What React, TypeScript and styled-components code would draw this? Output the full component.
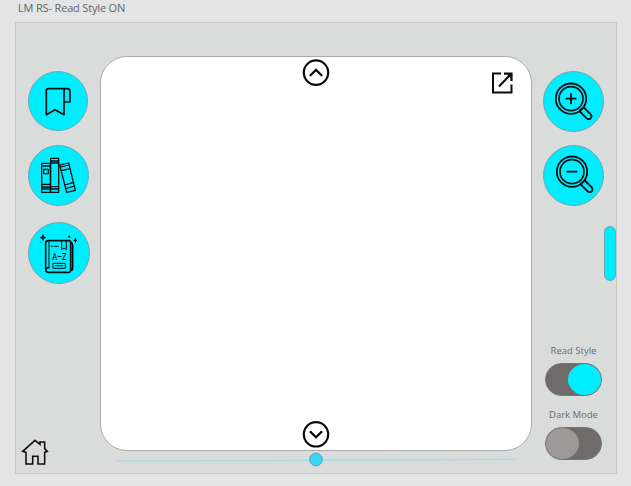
import React, { ReactNode } from "react";
import styled, { createGlobalStyle } from "styled-components";

const GlobalStyle = createGlobalStyle`
  *, *::before, *::after { box-sizing: border-box; }
  body {
    margin: 0;
    background: #e4e4e4;
    font-family: "Open Sans", "Noto Sans", sans-serif;
    overflow: hidden;
  }
  svg { display: block; flex: none; }
`;

const Artboard = styled.div`
  width: 631px;
  height: 486px;
  padding-left: 15px;
`;

const Title = styled.h1`
  margin: 0;
  height: 22px;
  padding-left: 3px;
  font-size: 11px;
  font-weight: 400;
  line-height: 16px;
  letter-spacing: -0.17px;
  white-space: nowrap;
  color: #656565;
`;

const Screen = styled.main`
  display: grid;
  grid-template-columns: 84px 432px 84px;
  width: 602px;
  height: 452px;
  border: 1px solid #c7c9c9;
  background: #dadcdb;
`;

const Rail = styled.nav`
  display: flex;
  flex-direction: column;
  align-items: flex-start;
  padding: 48px 0 6px 12px;
`;

const ControlRail = styled.aside`
  display: flex;
  flex-direction: column;
  align-items: flex-start;
  padding: 48px 0 0 11px;
`;

const RoundButton = styled.button<{ $size: number; $gap?: number }>`
  display: flex;
  flex: none;
  width: ${(p) => p.$size}px;
  height: ${(p) => p.$size}px;
  margin: ${(p) => p.$gap ?? 0}px 0 0;
  padding: 0;
  border: 1px solid #6fa9ad;
  border-radius: 50%;
  background: #00ecff;
  color: #04100f;
`;

const PlainButton = styled.button<{ $push?: boolean }>`
  display: flex;
  flex: none;
  margin: ${(p) => (p.$push ? "auto 0 0 -7px" : "0")};
  padding: 0;
  border: 0;
  background: none;
  color: #0c0c0c;
`;

const Center = styled.section`
  display: flex;
  flex-direction: column;
  padding-top: 33px;
`;

const Page = styled.article`
  display: grid;
  grid-template-columns: 1fr 28px 1fr;
  grid-template-rows: 1fr auto;
  height: 395px;
  padding: 1px 15px 2px;
  border: 1px solid #a9abab;
  border-radius: 27px;
  background: #fff;
`;

const PageTop = styled.div`
  grid-column: 2;
`;

const PageCorner = styled.div`
  grid-column: 3;
  justify-self: end;
  padding-top: 11px;
`;

const PageBottom = styled.div`
  grid-column: 2;
`;

const ScrollHandle = styled.div`
  align-self: flex-end;
  flex: none;
  width: 12px;
  height: 55px;
  margin-top: 20px;
  border: 1px solid #6fa9ad;
  border-radius: 6px;
  background: #00ecff;
`;

const Setting = styled.label<{ $gap: number }>`
  display: flex;
  flex-direction: column;
  align-items: center;
  width: 57px;
  margin: ${(p) => p.$gap}px 0 0 2px;
`;

const SettingName = styled.span`
  height: 19px;
  font-size: 9.5px;
  line-height: 14px;
  white-space: nowrap;
  color: #6c6c6c;
`;

const Toggle = styled.span<{ $on: boolean }>`
  display: flex;
  justify-content: ${(p) => (p.$on ? "flex-end" : "flex-start")};
  width: 57px;
  height: 33px;
  border: 1px solid #777373;
  border-radius: 17px;
  background: #706b6b;

  &::after {
    content: "";
    width: 33px;
    height: 31px;
    border-radius: 50%;
    background: ${(p) => (p.$on ? "#00ecff" : "#9d9999")};
  }
`;

const Icon = ({ box, w, h, sw = 4.5, children }: {
  box: string; w: number; h: number; sw?: number; children: ReactNode;
}) => (
  <svg width={w} height={h} viewBox={box} fill="none" stroke="currentColor"
    strokeWidth={sw} strokeLinejoin="round" strokeLinecap="round">
    {children}
  </svg>
);

const BookmarkIcon = () => (
  <Icon box="27 21 174 174" w={58} h={58} sw={5}>
    <path d="M79 149V77q0-6 6-6h57q8 0 8 9v31h-18M132 149V80q0-9 6-9M79 149l26-15 27 15" />
  </Icon>
);

const BooksIcon = () => (
  <Icon box="27 24 177 177" w={59} h={59} sw={3.8}>
    <path d="M65 76h26v87H65zM92 61h24v102H92zM65 84h26M65 139h26M65 147h26M65 153h26M92 69h24M92 75h24M92 146h24M92 153h24M71 94h14v13H71z" />
    <path d="M119 81l27-6 20 82-26 6zM121 87l27-6M124 98l27-6M134 141l27-8M137 152l27-8" />
  </Icon>
);

const DictionaryIcon = () => (
  <Icon box="27 24 180 180" w={60} h={60} sw={4.8}>
    <path d="M77 164V84q0-7 8-7h62q5 0 5 6v82q0 7-7 7H86q-9 0-9-8M77 164q2-6 10-6M152 82q6 2 6 8v68q0 9-7 9" />
    <path strokeWidth="3" d="M87 80v78M125 77v27l7-5 7 5V77M93 94h4M102 94h12M100 145h36v15h-36zM107 152h22" />
    <path strokeWidth="2.8" fill="currentColor" d="M69 60l2 6 6 2-6 2-2 6-2-6-6-2 6-2zM166 71l1 4 4 1-4 1-1 5-1-5-4-1 4-1zM147 63h2v4h-2z" />
    <path strokeWidth="1.5" d="M62 81v1" />
    <text x="97" y="134" stroke="none" fill="currentColor" fontFamily="Roboto, sans-serif"
      fontWeight="500" fontSize="27" textLength="42" lengthAdjust="spacingAndGlyphs">A–Z</text>
  </Icon>
);

const ZoomIcon = ({ plus = false }: { plus?: boolean }) => (
  <Icon box={plus ? "27 22 177 177" : "24 25 177 177"} w={59} h={59} sw={5.4}>
    <circle cx="108" cy="102" r="45.5" />
    <circle cx="108" cy="102" r="36" strokeWidth="4.8" />
    <path d={plus ? "M94 102h28M108 88v28" : "M94 102h28"} />
    <path d="M136 142l19 19q5 4 11 1 6-6 2-12l-20-20M136 142v-6l9-8" />
  </Icon>
);

const ChevronIcon = ({ down = false }: { down?: boolean }) => (
  <Icon box="0 0 28 28" w={28} h={28} sw={2.2}>
    <circle cx="14" cy={down ? 14.3 : 14.6} r="12.2" />
    <path strokeLinejoin="miter" d={down ? "M8.5 11.9l5.5 5.3 5.5-5.3" : "M8.5 17.3l5.5-5.4 5.5 5.4"} />
  </Icon>
);

const OpenIcon = () => (
  <svg width="27" height="27" viewBox="0 0 27 27" fill="none" stroke="currentColor" strokeWidth="2">
    <path d="M12 4.5H4V23.5h18.5V15.5M10 17.5L20 7" />
    <path strokeWidth="2.2" d="M15 4.6h7.5V12" />
    <path stroke="none" fill="currentColor" d="M17 4.5h6v6z" />
  </svg>
);

const HomeIcon = () => (
  <Icon box="63 42 87 87" w={29} h={29} sw={4.6}>
    <path strokeLinejoin="miter" d="M68 82l37-33 15 12V54h14v20l8 8-8 3v35h-20V97H98v23H78V85z" />
  </Icon>
);

const Progress = () => (
  <svg width="432" height="18" viewBox="0 0 432 18">
    <path d="M17 10L416 8.5" stroke="#a5dce6" strokeWidth="1.6" />
    <circle cx="216" cy="8.5" r="6.4" fill="#37d7f7" stroke="#6999a5" strokeWidth=".9" />
  </svg>
);

export default function App() {
  return (
    <>
      <GlobalStyle />
      <Artboard>
        <Title>LM RS- Read Style ON</Title>
        <Screen>
          <Rail>
            <RoundButton $size={60} aria-label="Bookmark"><BookmarkIcon /></RoundButton>
            <RoundButton $size={61} $gap={14} aria-label="Library"><BooksIcon /></RoundButton>
            <RoundButton $size={62} $gap={16} aria-label="Dictionary"><DictionaryIcon /></RoundButton>
            <PlainButton $push aria-label="Home"><HomeIcon /></PlainButton>
          </Rail>
          <Center>
            <Page>
              <PageTop><PlainButton aria-label="Previous page"><ChevronIcon /></PlainButton></PageTop>
              <PageCorner><PlainButton aria-label="Open"><OpenIcon /></PlainButton></PageCorner>
              <PageBottom><PlainButton aria-label="Next page"><ChevronIcon down /></PlainButton></PageBottom>
            </Page>
            <Progress />
          </Center>
          <ControlRail>
            <RoundButton $size={61} aria-label="Zoom in"><ZoomIcon plus /></RoundButton>
            <RoundButton $size={61} $gap={13} aria-label="Zoom out"><ZoomIcon /></RoundButton>
            <ScrollHandle />
            <Setting $gap={63}>
              <SettingName>Read Style</SettingName>
              <Toggle $on />
            </Setting>
            <Setting $gap={12}>
              <SettingName>Dark Mode</SettingName>
              <Toggle $on={false} />
            </Setting>
          </ControlRail>
        </Screen>
      </Artboard>
    </>
  );
}
